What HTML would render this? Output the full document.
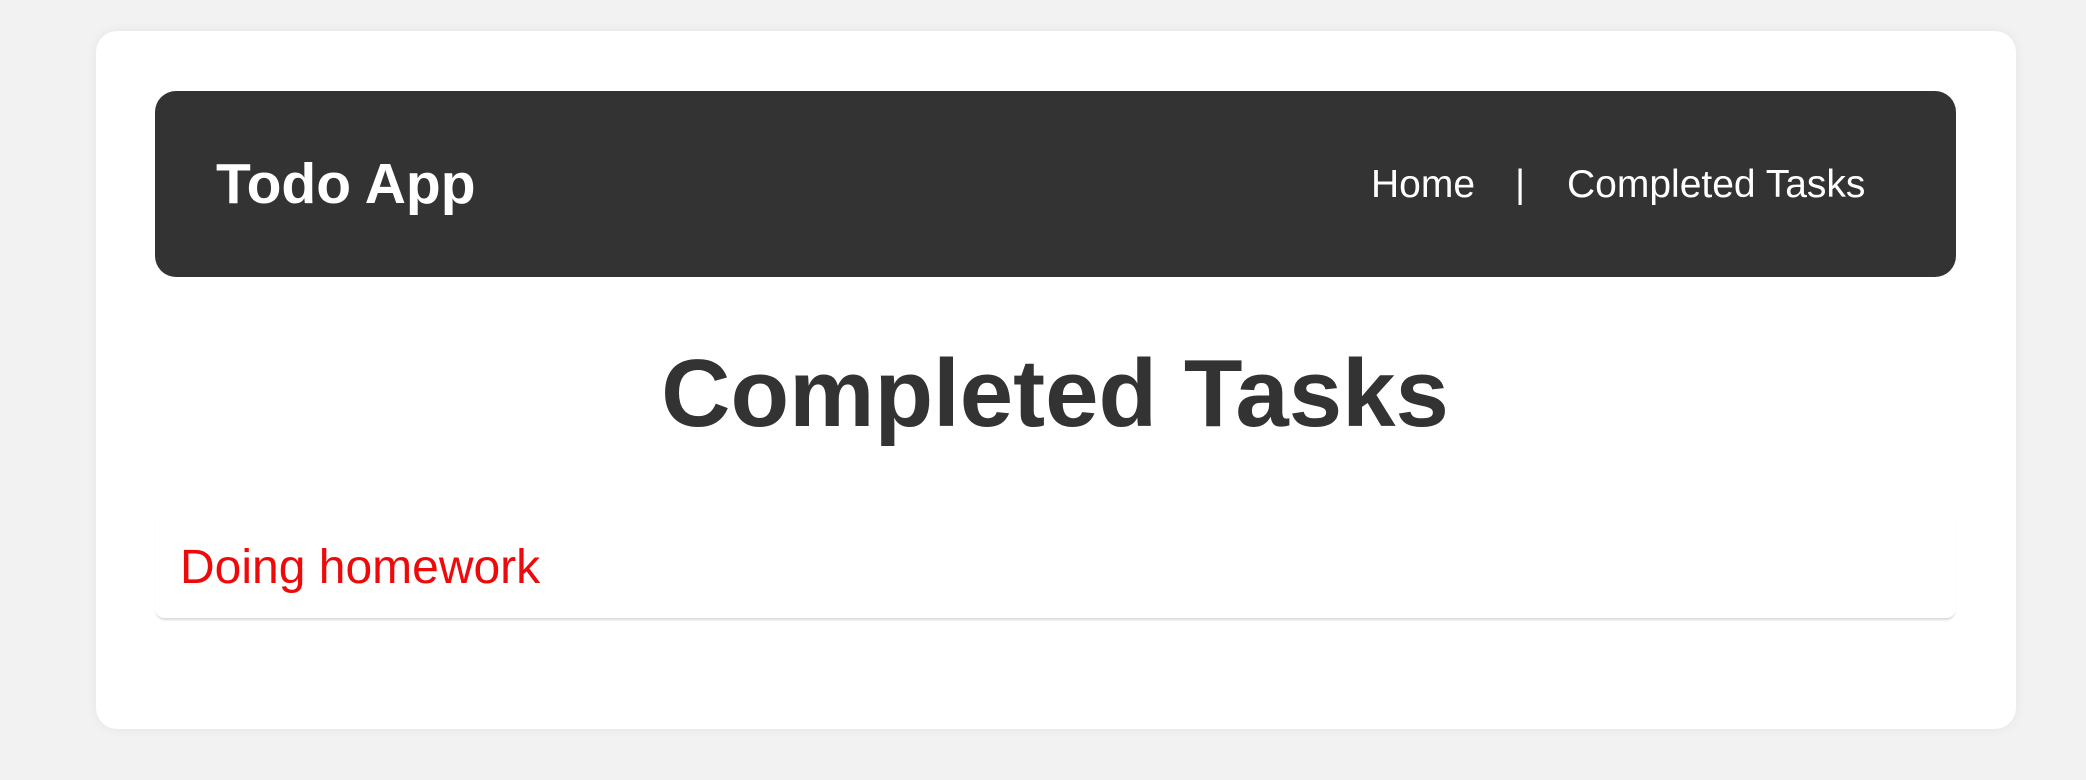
<!DOCTYPE html>
<html><head><style>
html,body{margin:0;padding:0;background:#f2f2f2;width:2086px;height:780px;overflow:hidden;font-family:"Liberation Sans",Arial,sans-serif}
.card{position:absolute;left:96px;top:31px;width:1920px;height:698px;background:#fff;border-radius:21px;box-shadow:0 0 12px rgba(0,0,0,0.06)}
.hdr{position:absolute;left:155px;top:91px;width:1801px;height:186px;background:#333;border-radius:21px}
.t{position:absolute;white-space:nowrap;line-height:1}
</style></head><body>
<div class="card"></div>
<div class="hdr"></div>
<div class="t" style="left:216px;top:156px;font-size:57px;font-weight:bold;color:#fff">Todo App</div>
<div class="t" style="left:1371px;top:165px;font-size:39px;color:#fff">Home</div>
<div class="t" style="left:1515px;top:165px;font-size:39px;color:#fff">|</div>
<div class="t" style="left:1567px;top:165px;font-size:39px;color:#fff">Completed Tasks</div>
<div class="t" style="left:0;width:2110px;text-align:center;top:346px;font-size:96px;font-weight:bold;color:#333">Completed Tasks</div>
<div style="position:absolute;left:155px;top:510px;width:1801px;height:108px;background:#fff;border-radius:10px;box-shadow:0 3px 2px -1px rgba(0,0,0,0.15)"></div>
<div class="t" style="left:180px;top:544px;font-size:48px;color:#ee0a0a">Doing homework</div>
</body></html>
